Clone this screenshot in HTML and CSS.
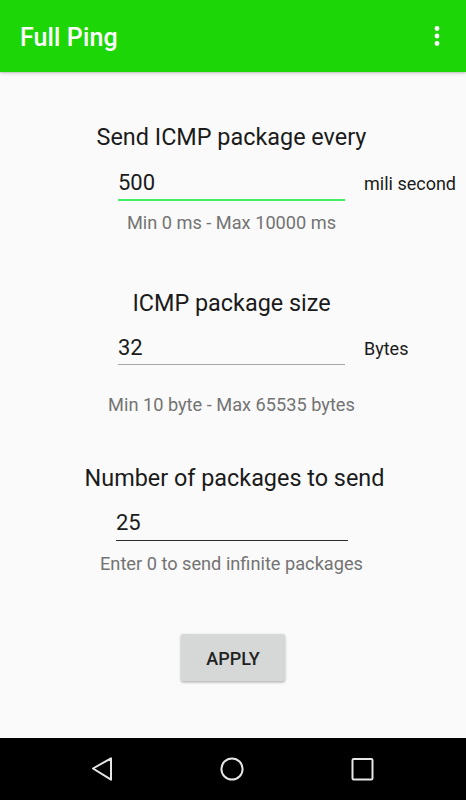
FILE: index.html
```html
<!DOCTYPE html>
<html>
<head>
<meta charset="utf-8">
<link rel="stylesheet" href="styles.css">
</head>
<body>
<div class="screen">
  <header class="appbar">
    <div class="app-title">Full Ping</div>
    <svg class="overflow" width="8" height="24" viewBox="0 0 8 24">
      <circle cx="4" cy="4.5" r="2.4" fill="#fff"/>
      <circle cx="4" cy="12" r="2.4" fill="#fff"/>
      <circle cx="4" cy="19.5" r="2.4" fill="#fff"/>
    </svg>
  </header>
  <main class="content">
    <section class="group first">
      <div class="title">Send ICMP package every</div>
      <div class="row">
        <div class="input active">500</div>
        <div class="unit">mili second</div>
      </div>
      <div class="hint hint-near">Min 0 ms - Max 10000 ms</div>
    </section>
    <section class="group second">
      <div class="title">ICMP package size</div>
      <div class="row">
        <div class="input gray">32</div>
        <div class="unit">Bytes</div>
      </div>
      <div class="hint hint-far">Min 10 byte - Max 65535 bytes</div>
    </section>
    <section class="group third">
      <div class="title">Number of packages to send</div>
      <div class="row row-wide">
        <div class="input dark wide">25</div>
      </div>
      <div class="hint hint-near2">Enter 0 to send infinite packages</div>
    </section>
    <div class="actions">
      <button class="apply">APPLY</button>
    </div>
  </main>
  <nav class="navbar">
    <svg width="24" height="24" viewBox="0 0 24 24">
      <polygon points="3,11.5 21,1.3 21,22.7" fill="none" stroke="#e6e6e6" stroke-width="2" stroke-linejoin="round"/>
    </svg>
    <svg width="24" height="24" viewBox="0 0 24 24">
      <circle cx="12" cy="12" r="10.6" fill="none" stroke="#e6e6e6" stroke-width="2"/>
    </svg>
    <svg width="24" height="24" viewBox="0 0 24 24">
      <rect x="2.5" y="2" width="20" height="20.5" rx="1.2" fill="none" stroke="#e6e6e6" stroke-width="2"/>
    </svg>
  </nav>
</div>
</body>
</html>
```
FILE: styles.css
```css
* { box-sizing: border-box; }
html, body {
  margin: 0;
  padding: 0;
  width: 466px;
  height: 800px;
  overflow: hidden;
  background: #fafafa;
  font-family: Roboto, "Noto Sans", sans-serif;
}
.screen {
  display: flex;
  flex-direction: column;
  height: 800px;
}
.appbar {
  position: relative;
  z-index: 2;
  height: 72px;
  flex: 0 0 72px;
  background: #1dd607;
  display: flex;
  align-items: center;
  justify-content: space-between;
  padding: 2px 25px 0 20px;
  box-shadow: 0 1px 2px rgba(0,0,0,0.18), 0 2px 4px rgba(0,0,0,0.08);
}
.app-title {
  color: #fff;
  font-size: 25px;
  font-weight: 500;
  letter-spacing: 0.1px;
}
.overflow {
  display: block;
  margin-top: -2px;
}
.content {
  flex: 1;
  display: flex;
  flex-direction: column;
  padding-right: 3px;
}
.group {
  display: flex;
  flex-direction: column;
}
.first { margin-top: 51px; }
.second { margin-top: 55px; }
.third { margin-top: 48px; }
.title {
  text-align: center;
  font-size: 23.4px;
  line-height: 28px;
  color: #1b1b1b;
}
.third .title { padding-left: 6px; }
.row {
  display: flex;
  align-items: baseline;
  padding-left: 118px;
  margin-top: 19px;
}
.second .row, .third .row { margin-top: 18px; }
.row-wide { padding-left: 116px; }
.input {
  width: 227px;
  font-size: 22px;
  line-height: 26px;
  color: #1b1b1b;
  padding-bottom: 3px;
}
.input.active { border-bottom: 2px solid #41f064; }
.input.gray { border-bottom: 1px solid #a6a6a6; }
.input.dark { border-bottom: 1px solid #2a2a2a; padding-bottom: 4px; }
.input.wide { width: 232px; }
.unit {
  margin-left: 19px;
  font-size: 18px;
  color: #1b1b1b;
}
.hint {
  text-align: center;
  font-size: 18.2px;
  line-height: 22px;
  color: #737373;
}
.hint-near { margin-top: 11px; }
.hint-far { margin-top: 29px; }
.hint-near2 { margin-top: 12px; }
.actions {
  display: flex;
  justify-content: center;
  margin-top: 59px;
  padding-left: 3px;
}
.apply {
  width: 104px;
  height: 47px;
  border: none;
  border-radius: 2px;
  background: #d6d7d7;
  font-family: Roboto, sans-serif;
  font-size: 18px;
  font-weight: 500;
  color: #222;
  box-shadow: 0 1px 3px rgba(0,0,0,0.25), 0 2px 2px rgba(0,0,0,0.08);
  padding: 2px 0 0;
}
.navbar {
  flex: 0 0 62px;
  height: 62px;
  background: #000;
  display: flex;
  justify-content: center;
  align-items: flex-start;
  gap: 106px;
  padding-top: 19px;
  padding-right: 2px;
}
.navbar svg { display: block; }
```
